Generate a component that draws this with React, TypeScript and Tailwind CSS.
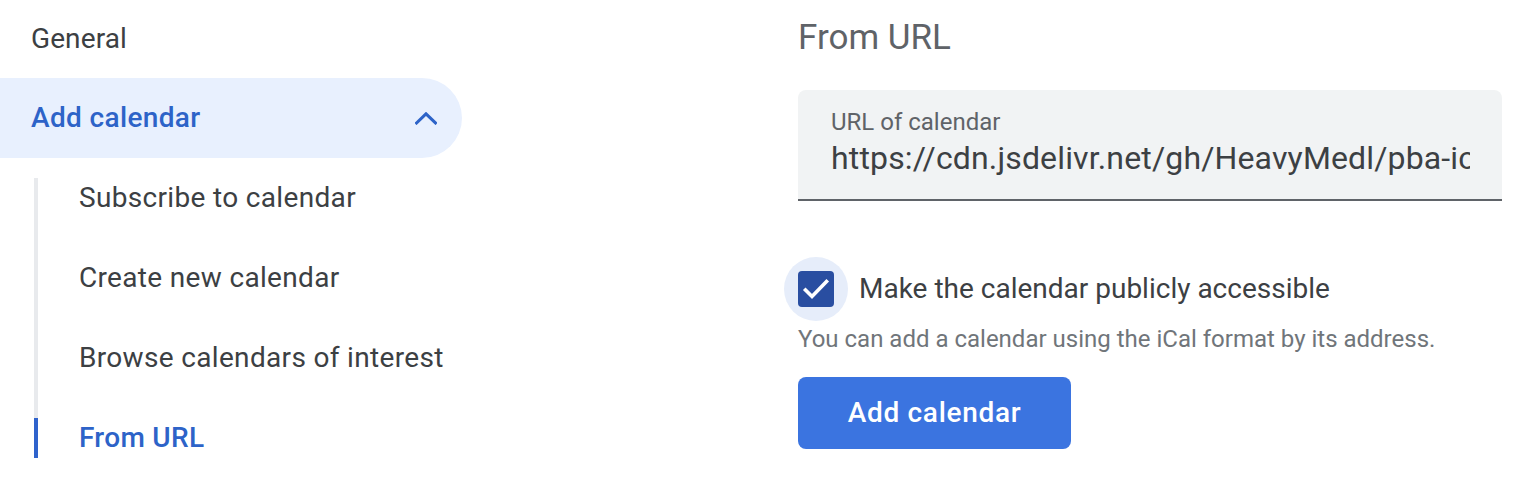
import React from "react";

const subItems = [
  { label: "Subscribe to calendar", active: false },
  { label: "Create new calendar", active: false },
  { label: "Browse calendars of interest", active: false },
  { label: "From URL", active: true },
];

function ChevronUp() {
  return (
    <svg width="22" height="13" viewBox="0 0 22 13" fill="none">
      <path d="M1.5 11 L11 1.8 L20.5 11" stroke="#2d63c8" strokeWidth="3" strokeLinecap="square" />
    </svg>
  );
}

function CheckMark() {
  return (
    <svg width="28" height="22" viewBox="0 0 28 22" fill="none">
      <path d="M3.5 12 L10 18.5 L24.5 3.5" stroke="#ffffff" strokeWidth="3.6" strokeLinecap="square" />
    </svg>
  );
}

export default function App() {
  return (
    <div className="flex w-[1516px] h-[490px] bg-white font-['Roboto','Liberation_Sans',sans-serif] overflow-hidden">
      {/* settings nav */}
      <div className="w-[462px] shrink-0">
        <div className="h-[78px] flex items-center pl-[31px] text-[28px] tracking-[0.1px] text-[#3c4043]">General</div>
        <div className="h-[80px] flex items-center justify-between pl-[31px] pr-[25px] rounded-r-full bg-[#e8f0fe]">
          <span className="text-[28px] font-medium tracking-[0.35px] text-[#2d63c8]">Add calendar</span>
          <ChevronUp />
        </div>
        <div className="mt-[20px] ml-[34px] border-l-4 border-[#e8eaed] flex flex-col gap-[40px]">
          {subItems.map((item) => (
            <div
              key={item.label}
              className={
                item.active
                  ? "-ml-[4px] h-[40px] flex items-center pl-[41px] border-l-4 border-[#2f63cc] text-[28px] font-medium tracking-[0.3px] text-[#2d63c8]"
                  : "-ml-[4px] h-[40px] flex items-center pl-[41px] border-l-4 border-transparent text-[28px] tracking-[0.33px] text-[#3c4043]"
              }
            >
              {item.label}
            </div>
          ))}
        </div>
      </div>

      {/* content */}
      <div className="ml-[336px] w-[704px] shrink-0">
        <h2 className="mt-[18px] text-[35px] leading-[40px] font-normal text-[#5f6368]">From URL</h2>

        <div className="mt-[32px] rounded-t-[8px] bg-[#f1f3f4] border-b-2 border-[#5f6368] pl-[33px] pr-[32px] pt-[16px] pb-[21px]">
          <div className="text-[24px] leading-[32px] text-[#5f6368]">URL of calendar</div>
          <div className="text-[32px] leading-[40px] tracking-[0.15px] text-[#3c4043] whitespace-nowrap overflow-hidden">
            https://cdn.jsdelivr.net/gh/HeavyMedl/pba-icals/main/calendar.ics
          </div>
        </div>

        <div className="mt-[56px] flex items-center">
          <div className="-ml-[14px] w-[64px] h-[64px] rounded-full bg-[#e6edfa] flex items-center justify-center">
            <div className="w-[36px] h-[36px] rounded-[4px] bg-[#294ea1] flex items-center justify-center">
              <CheckMark />
            </div>
          </div>
          <span className="ml-[11px] text-[28px] text-[#3c4043]">Make the calendar publicly accessible</span>
        </div>

        <p className="mt-[2px] text-[24px] leading-[32px] text-[#70757a]">
          You can add a calendar using the iCal format by its address.
        </p>

        <button className="mt-[22px] w-[273px] h-[72px] rounded-[8px] bg-[#3b74e0] text-white text-[28px] font-medium tracking-[0.7px]">
          Add calendar
        </button>
      </div>
    </div>
  );
}
